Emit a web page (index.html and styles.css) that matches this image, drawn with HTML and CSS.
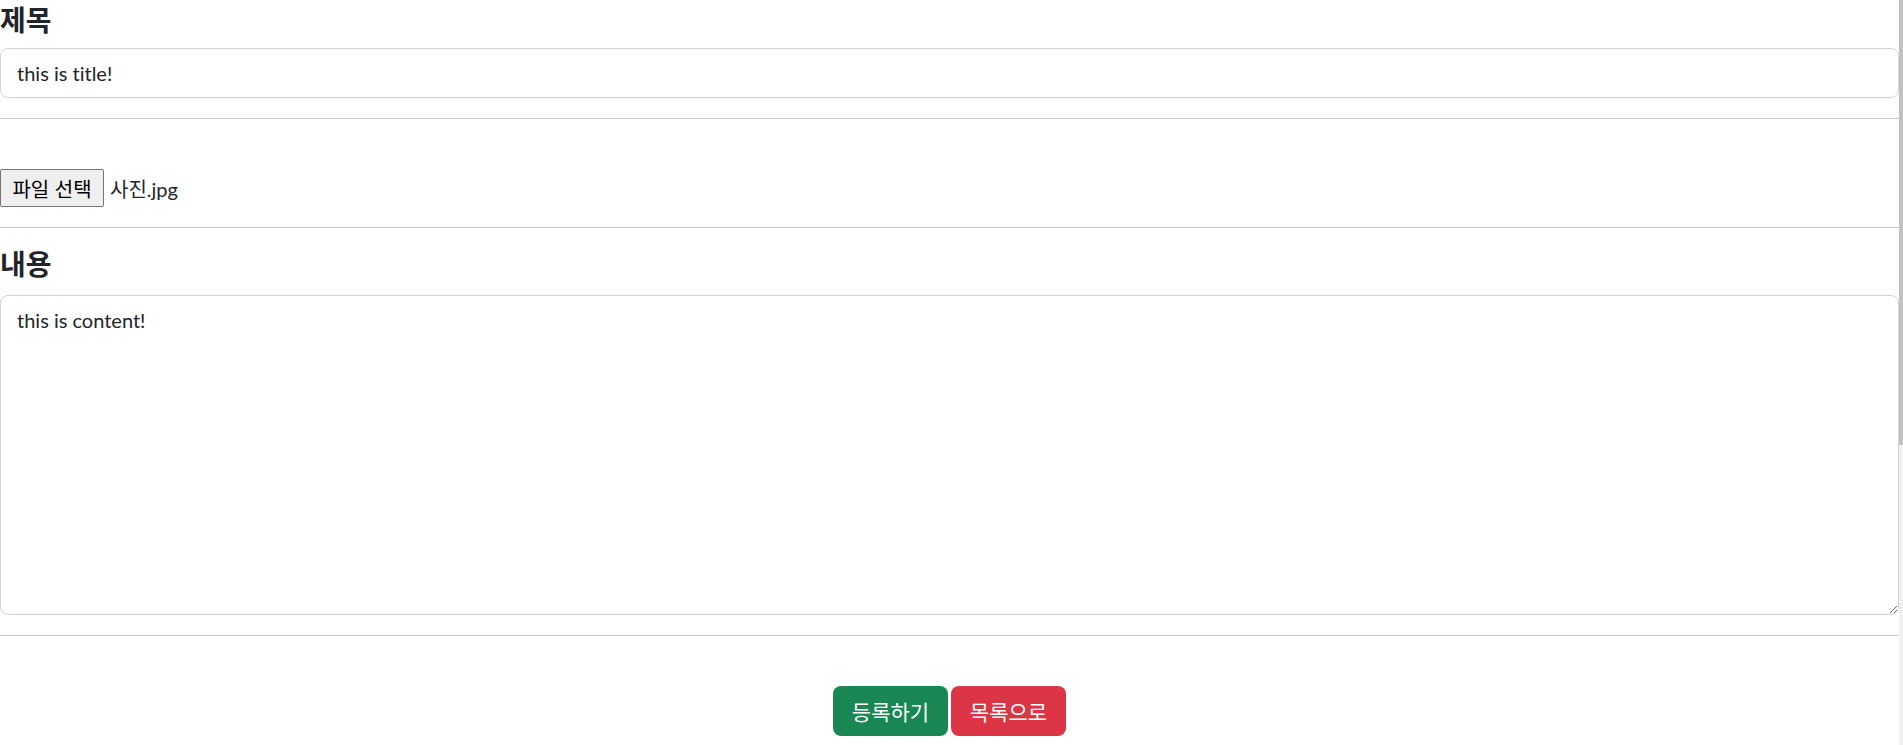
FILE: index.html
```html
<!DOCTYPE html>
<html lang="ko">
<head>
<meta charset="utf-8">
<title>글쓰기</title>
<link rel="stylesheet" href="styles.css">
</head>
<body>
<div class="page">
  <h3 class="label">제목</h3>
  <input class="field" type="text" value="this is title!">
  <hr class="rule rule-first">
  <div class="file-row">
    <button class="file-btn" type="button">파일 선택</button>
    <span class="file-name">사진.jpg</span>
  </div>
  <hr class="rule rule-second">
  <h3 class="label label-content">내용</h3>
  <textarea class="field area">this is content!</textarea>
  <hr class="rule rule-third">
  <div class="actions">
    <button class="btn btn-green" type="button">등록하기</button>
    <button class="btn btn-red" type="button">목록으로</button>
  </div>
</div>
<div class="scrollbar"><div class="thumb"></div></div>
</body>
</html>
```
FILE: styles.css
```css
html, body {
  margin: 0;
  padding: 0;
  background: #fff;
  overflow: hidden;
}
body {
  font-family: Lato, "Noto Sans CJK KR", sans-serif;
  color: #212529;
  font-size: 16px;
  font-variant-ligatures: none;
}
.page {
  margin-right: 4px;
  display: flex;
  flex-direction: column;
}
.label {
  margin: 0 0 8px 0;
  font-size: 28px;
  font-weight: 700;
  line-height: 40px;
  height: 40px;
}
.label-content {
  margin-bottom: 11px;
}
.field {
  box-sizing: border-box;
  display: block;
  width: 100%;
  height: 50px;
  margin: 0;
  padding: 9px 16px;
  border: 1px solid #ced4da;
  border-radius: 8px;
  font-family: Lato, "Noto Sans CJK KR", sans-serif;
  font-variant-ligatures: none;
  font-size: 20px;
  line-height: 30px;
  color: #212529;
  background: #fff;
  outline: none;
}
.area {
  height: 320px;
  resize: vertical;
}
.rule {
  border: 0;
  border-top: 1px solid #c8c9ca;
  margin: 0;
  height: 0;
}
.rule-first {
  margin-top: 20px;
  margin-bottom: 50px;
}
.rule-second {
  margin-top: 20px;
  margin-bottom: 16px;
}
.rule-third {
  margin-top: 20px;
  margin-bottom: 50px;
}
.file-row {
  display: flex;
  align-items: center;
  height: 38px;
  gap: 6px;
}
.file-btn {
  box-sizing: border-box;
  height: 38px;
  width: 104px;
  padding: 0;
  background: #efefef;
  border: 1px solid #767676;
  border-radius: 2px;
  font-family: "Noto Sans CJK KR", sans-serif;
  font-size: 20px;
  color: #000;
}
.file-name {
  font-size: 20px;
  color: #212529;
}
.actions {
  display: flex;
  justify-content: center;
  gap: 3px;
}
.btn {
  box-sizing: border-box;
  width: 115px;
  height: 50px;
  border: 0;
  border-radius: 8px;
  color: #fff;
  font-family: Lato, "Noto Sans CJK KR", sans-serif;
  font-size: 21px;
  padding: 0;
}
.btn-green {
  background: #198754;
}
.btn-red {
  background: #dc3545;
}
.scrollbar {
  position: fixed;
  top: 0;
  right: 0;
  width: 4px;
  height: 100%;
  background: #f1f1f1;
}
.thumb {
  height: 445px;
  background: #c1c1c1;
}
```
